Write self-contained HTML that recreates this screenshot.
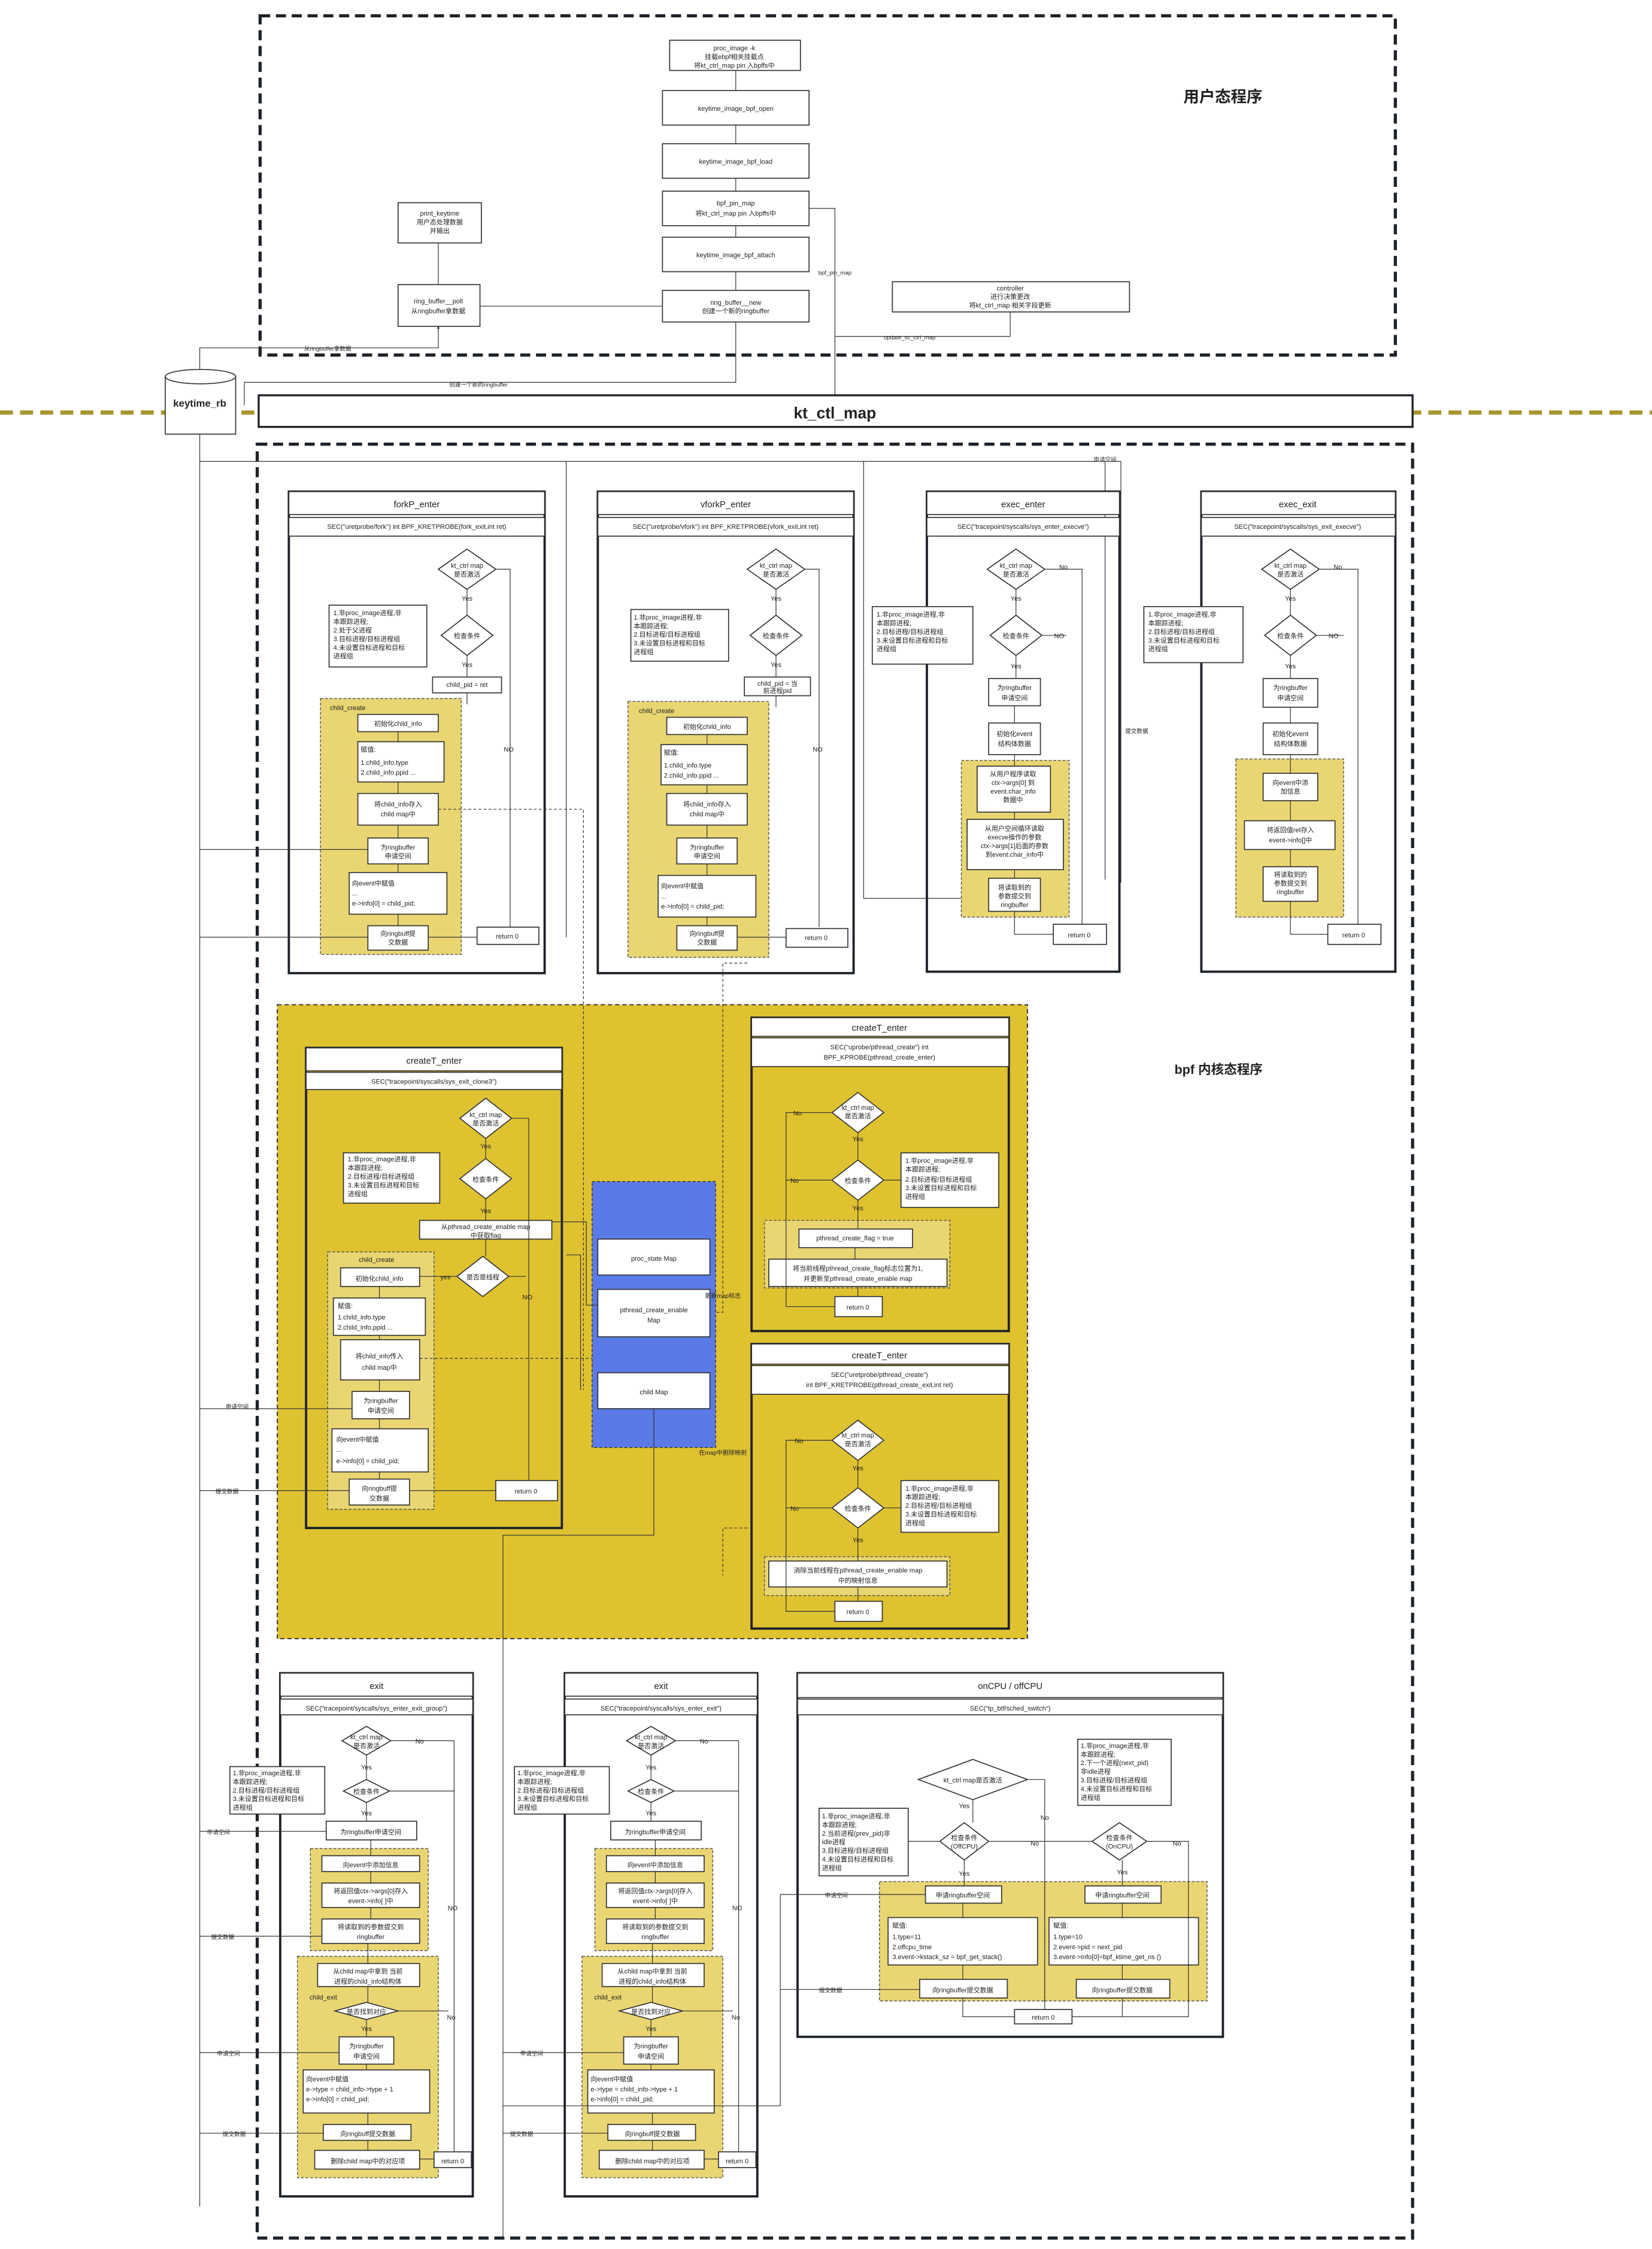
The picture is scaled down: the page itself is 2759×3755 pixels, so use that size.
<!DOCTYPE html>
<html><head><meta charset="utf-8">
<style>
html,body{margin:0;padding:0;background:#fff;}
svg{display:block}
text{font-family:"Liberation Sans","Noto Sans CJK SC",sans-serif;font-size:4.6px;fill:#222;text-anchor:middle}
.l{text-anchor:start}
.b{fill:#fff;stroke:#333;stroke-width:.7}
.p{fill:none;stroke:#1e2329;stroke-width:1.6}
.g{fill:#e9d672;stroke:#555;stroke-width:.6;stroke-dasharray:2,1.2}
.ln{fill:none;stroke:#333;stroke-width:.5}
.dl{fill:none;stroke:#333;stroke-width:.5;stroke-dasharray:2,1.5}
.bd{fill:none;stroke:#1e2329;stroke-width:2.2;stroke-dasharray:7,4}
.tt{font-size:6.2px}
</style></head><body>
<svg width="2759" height="3755" viewBox="0 0 1149.6 1564.6" xmlns="http://www.w3.org/2000/svg">
<defs><marker id="a" viewBox="0 0 6 6" refX="5" refY="3" markerWidth="4" markerHeight="4" orient="auto"><path d="M0,0L6,3L0,6z" fill="#333"/></marker></defs>

<!-- user space -->
<rect x="181" y="11" width="790" height="236" class="bd"/>
<text x="851" y="71" style="font-size:11px;font-weight:bold">用户态程序</text>
<rect x="466" y="28" width="91" height="21" class="b"/><text x="511" y="35">proc_image -k</text><text x="511" y="41">挂载ebpf相关挂载点</text><text x="511" y="47">将kt_ctrl_map pin 入bpffs中</text>
<rect x="461" y="63" width="102" height="24" class="b"/><text x="512" y="77">keytime_image_bpf_open</text>
<rect x="461" y="100" width="102" height="24" class="b"/><text x="512" y="114">keytime_image_bpf_load</text>
<rect x="461" y="133" width="102" height="24" class="b"/><text x="512" y="143">bpf_pin_map</text><text x="512" y="150">将kt_ctrl_map pin 入bpffs中</text>
<rect x="461" y="165" width="102" height="24" class="b"/><text x="512" y="179">keytime_image_bpf_attach</text>
<rect x="461" y="202" width="102" height="22" class="b"/><text x="512" y="212">ring_buffer__new</text><text x="512" y="218">创建一个新的ringbuffer</text>
<rect x="277" y="198" width="57" height="29" class="b"/><text x="305" y="211">ring_buffer__poll</text><text x="305" y="218">从ringbuffer拿数据</text>
<rect x="277" y="141" width="58" height="28" class="b"/><text x="306" y="150">print_keytime</text><text x="306" y="156">用户态处理数据</text><text x="306" y="162">并输出</text>
<rect x="621" y="196" width="165" height="21" class="b"/><text x="703" y="202">controller</text><text x="703" y="208">进行决策更改</text><text x="703" y="214">将kt_ctrl_map 相关字段更新</text>
<path d="M512 49V63M512 87V100M512 124V133M512 157V165M512 189V202M461 213H334M305 198V169M563 145H581V275M703 217V234H581M512 224V266H170V282M139 260V242H305V227" class="ln" marker-end="url(#a)"/>
<text x="581" y="191" style="font-size:4px">bpf_pin_map</text>
<text x="633" y="236" style="font-size:4px">update_sc_ctrl_map</text>
<text x="228" y="244" style="font-size:4px">从ringbuffer拿数据</text>
<text x="333" y="269" style="font-size:4px">创建一个新的ringbuffer</text>

<!-- middle -->
<path d="M0 287H1150" stroke="#a89530" stroke-width="3" stroke-dasharray="9,5"/>
<rect x="115" y="262" width="49" height="40" fill="#fff" stroke="#333" stroke-width=".7"/>
<ellipse cx="139.5" cy="262" rx="24.5" ry="5" fill="#fff" stroke="#333" stroke-width=".7"/>
<text x="139" y="283" style="font-size:7px;font-weight:bold">keytime_rb</text>
<rect x="180" y="275" width="803" height="22" fill="#fff" stroke="#1e2329" stroke-width="1.4"/>
<text x="581" y="291" style="font-size:11px;font-weight:bold">kt_ctl_map</text>

<!-- kernel -->
<rect x="179" y="309" width="804" height="1248" class="bd"/>
<text x="848" y="747" style="font-size:9px;font-weight:bold">bpf 内核态程序</text>
<path d="M139 1535V302M139 321H780M394 321V652M601 321V625H669M780 321V614M769 321V612" class="ln"/>
<text x="769" y="321" style="font-size:4px;fill:#333">申请空间</text>
<text x="791" y="510" style="font-size:4px">提交数据</text>

<!-- forkP -->
<g>
<rect x="201" y="342" width="178" height="335" class="p"/>
<rect x="201" y="342" width="178" height="16" class="b"/><text x="290" y="353" class="tt">forkP_enter</text>
<rect x="201" y="360" width="178" height="13" class="b"/><text x="290" y="368">SEC("uretprobe/fork") int BPF_KRETPROBE(fork_exit,int ret)</text>
<path d="M325 382l20 14l-20 14l-20-14z" class="b"/><text x="325" y="395">kt_ctrl map</text><text x="325" y="401">是否激活</text>
<path d="M325 428l18 14l-18 14l-18-14z" class="b"/><text x="325" y="444">检查条件</text>
<rect x="229" y="421" width="68" height="43" class="b"/><text class="l" x="232" y="428">1.非proc_image进程,非</text><text class="l" x="232" y="434">本跟踪进程;</text><text class="l" x="232" y="440">2.处于父进程</text><text class="l" x="232" y="446">3.目标进程/目标进程组</text><text class="l" x="232" y="452">4.未设置目标进程和目标</text><text class="l" x="232" y="458">进程组</text>
<rect x="301" y="471" width="48" height="11" class="b"/><text x="325" y="478">child_pid = ret</text>
<text x="325" y="418">Yes</text><text x="325" y="464">Yes</text><text x="354" y="523">NO</text>
<rect x="223" y="486" width="98" height="178" class="g"/><text x="242" y="494">child_create</text>
<rect x="249" y="497" width="56" height="12" class="b"/><text x="277" y="505">初始化child_info</text>
<rect x="249" y="516" width="60" height="28" class="b"/><text class="l" x="251" y="523">赋值:</text><text class="l" x="251" y="532">1.child_info.type</text><text class="l" x="251" y="539">2.child_info.ppid ...</text>
<rect x="249" y="552" width="56" height="22" class="b"/><text x="277" y="561">将child_info存入</text><text x="277" y="568">child map中</text>
<rect x="256" y="583" width="42" height="18" class="b"/><text x="277" y="591">为ringbuffer</text><text x="277" y="597">申请空间</text>
<rect x="243" y="607" width="68" height="29" class="b"/><text class="l" x="245" y="616">向event中赋值</text><text class="l" x="245" y="623">...</text><text class="l" x="245" y="630">e->info[0] = child_pid;</text>
<rect x="256" y="644" width="42" height="17" class="b"/><text x="277" y="651">向ringbuff提</text><text x="277" y="657">交数据</text>
<rect x="332" y="645" width="43" height="12" class="b"/><text x="353" y="653">return 0</text>
<path d="M325 410V428M325 456V471M325 482V490M277 509V516M277 544V552M277 574V583M277 601V607M277 636V644M298 652H332M345 396H355V645M139 591H256M139 652H256" class="ln"/>
</g>
<!-- vforkP -->
<g transform="translate(215,0)">
<rect x="201" y="342" width="178" height="335" class="p"/>
<rect x="201" y="342" width="178" height="16" class="b"/><text x="290" y="353" class="tt">vforkP_enter</text>
<rect x="201" y="360" width="178" height="13" class="b"/><text x="290" y="368">SEC("uretprobe/vfork")  int BPF_KRETPROBE(vfork_exit,int ret)</text>
<path d="M325 382l20 14l-20 14l-20-14z" class="b"/><text x="325" y="395">kt_ctrl map</text><text x="325" y="401">是否激活</text>
<path d="M325 428l18 14l-18 14l-18-14z" class="b"/><text x="325" y="444">检查条件</text>
<rect x="224" y="424" width="68" height="36" class="b"/><text class="l" x="226" y="431">1.非proc_image进程,非</text><text class="l" x="226" y="437">本跟踪进程;</text><text class="l" x="226" y="443">2.目标进程/目标进程组</text><text class="l" x="226" y="449">3.未设置目标进程和目标</text><text class="l" x="226" y="455">进程组</text>
<rect x="303" y="471" width="46" height="13" class="b"/><text x="326" y="477">child_pid = 当</text><text x="326" y="482">前进程pid</text>
<text x="325" y="418">Yes</text><text x="325" y="464">Yes</text><text x="354" y="523">NO</text>
<rect x="222" y="488" width="98" height="178" class="g"/><text x="242" y="496">child_create</text>
<rect x="249" y="499" width="56" height="12" class="b"/><text x="277" y="507">初始化child_info</text>
<rect x="245" y="518" width="60" height="28" class="b"/><text class="l" x="247" y="525">赋值:</text><text class="l" x="247" y="534">1.child_info.type</text><text class="l" x="247" y="541">2.child_info.ppid ...</text>
<rect x="249" y="552" width="56" height="22" class="b"/><text x="277" y="561">将child_info存入</text><text x="277" y="568">child map中</text>
<rect x="256" y="583" width="42" height="18" class="b"/><text x="277" y="591">为ringbuffer</text><text x="277" y="597">申请空间</text>
<rect x="243" y="609" width="68" height="29" class="b"/><text class="l" x="245" y="618">向event中赋值</text><text class="l" x="245" y="625">...</text><text class="l" x="245" y="632">e->info[0] = child_pid;</text>
<rect x="256" y="644" width="42" height="17" class="b"/><text x="277" y="651">向ringbuff提</text><text x="277" y="657">交数据</text>
<rect x="332" y="646" width="43" height="13" class="b"/><text x="353" y="654">return 0</text>
<path d="M325 410V428M325 456V471M325 484V492M277 511V518M277 546V552M277 574V583M277 601V609M277 638V644M298 652H332M345 396H355V645" class="ln"/>
</g>
<!-- exec_enter -->
<g>
<rect x="645" y="342" width="134" height="334" class="p"/>
<rect x="645" y="342" width="134" height="16" class="b"/><text x="712" y="353" class="tt">exec_enter</text>
<rect x="645" y="360" width="134" height="13" class="b"/><text x="712" y="368">SEC("tracepoint/syscalls/sys_enter_execve")</text>
<path d="M707 382l20 14l-20 14l-20-14z" class="b"/><text x="707" y="395">kt_ctrl map</text><text x="707" y="401">是否激活</text>
<path d="M707 428l18 14l-18 14l-18-14z" class="b"/><text x="707" y="444">检查条件</text>
<rect x="607" y="422" width="70" height="40" class="b"/><text class="l" x="610" y="429">1.非proc_image进程,非</text><text class="l" x="610" y="435">本跟踪进程;</text><text class="l" x="610" y="441">2.目标进程/目标进程组</text><text class="l" x="610" y="447">3.未设置目标进程和目标</text><text class="l" x="610" y="453">进程组</text>
<text x="740" y="396">No</text><text x="737" y="444">NO</text><text x="707" y="418">Yes</text><text x="707" y="465">Yes</text>
<rect x="688" y="472" width="36" height="19" class="b"/><text x="706" y="480">为ringbuffer</text><text x="706" y="487">申请空间</text>
<rect x="688" y="503" width="36" height="22" class="b"/><text x="706" y="512">初始化event</text><text x="706" y="519">结构体数据</text>
<rect x="669" y="529" width="75" height="109" class="g"/>
<rect x="680" y="533" width="51" height="32" class="b"/><text x="705" y="540">从用户程序读取</text><text x="705" y="546">ctx->args[0] 到</text><text x="705" y="552">event.char_info</text><text x="705" y="558">数据中</text>
<rect x="673" y="570" width="67" height="35" class="b"/><text x="706" y="578">从用户空间循环读取</text><text x="706" y="584">execve操作的参数</text><text x="706" y="590">ctx->args[1]后面的参数</text><text x="706" y="596">到event.char_info中</text>
<rect x="688" y="611" width="36" height="23" class="b"/><text x="706" y="619">将读取到的</text><text x="706" y="625">参数提交到</text><text x="706" y="631">ringbuffer</text>
<rect x="733" y="643" width="37" height="14" class="b"/><text x="751" y="652">return 0</text>
<path d="M707 410V428M707 456V472M706 491V503M706 525V533M706 565V570M706 605V611M727 396H753V643M725 442H742M706 634V650H733" class="ln"/>
</g>
<!-- exec_exit -->
<g>
<rect x="836" y="342" width="135" height="334" class="p"/>
<rect x="836" y="342" width="135" height="16" class="b"/><text x="903" y="353" class="tt">exec_exit</text>
<rect x="836" y="360" width="135" height="13" class="b"/><text x="903" y="368">SEC("tracepoint/syscalls/sys_exit_execve")</text>
<path d="M898 382l20 14l-20 14l-20-14z" class="b"/><text x="898" y="395">kt_ctrl map</text><text x="898" y="401">是否激活</text>
<path d="M898 428l18 14l-18 14l-18-14z" class="b"/><text x="898" y="444">检查条件</text>
<rect x="796" y="422" width="69" height="39" class="b"/><text class="l" x="799" y="429">1.非proc_image进程,非</text><text class="l" x="799" y="435">本跟踪进程;</text><text class="l" x="799" y="441">2.目标进程/目标进程组</text><text class="l" x="799" y="447">3.未设置目标进程和目标</text><text class="l" x="799" y="453">进程组</text>
<text x="931" y="396">No</text><text x="928" y="444">NO</text><text x="898" y="418">Yes</text><text x="898" y="465">Yes</text>
<rect x="879" y="472" width="38" height="20" class="b"/><text x="898" y="480">为ringbuffer</text><text x="898" y="487">申请空间</text>
<rect x="879" y="503" width="38" height="22" class="b"/><text x="898" y="512">初始化event</text><text x="898" y="519">结构体数据</text>
<rect x="860" y="528" width="75" height="110" class="g"/>
<rect x="879" y="538" width="38" height="19" class="b"/><text x="898" y="546">向event中添</text><text x="898" y="552">加信息</text>
<rect x="866" y="571" width="63" height="20" class="b"/><text x="898" y="579">将返回值ret存入</text><text x="898" y="586">event->info[]中</text>
<rect x="879" y="603" width="38" height="24" class="b"/><text x="898" y="610">将读取到的</text><text x="898" y="616">参数提交到</text><text x="898" y="622">ringbuffer</text>
<rect x="924" y="643" width="37" height="14" class="b"/><text x="942" y="652">return 0</text>
<path d="M898 410V428M898 456V472M898 492V503M898 525V538M898 557V571M898 591V603M918 396H945V643M916 442H935M898 627V650H924" class="ln"/>
</g>

<!-- yellow region -->
<rect x="193" y="699" width="522" height="441" fill="#dfc230" stroke="#333" stroke-width=".8" stroke-dasharray="3,2"/>
<g>
<rect x="213" y="729" width="178" height="334" class="p"/>
<rect x="213" y="729" width="178" height="16" class="b"/><text x="302" y="740" class="tt">createT_enter</text>
<rect x="213" y="746" width="178" height="12" class="b"/><text x="302" y="754">SEC("tracepoint/syscalls/sys_exit_clone3")</text>
<path d="M338 764l18 14l-18 14l-18-14z" class="b"/><text x="338" y="777">kt_ctrl map</text><text x="338" y="783">是否激活</text>
<path d="M338 806l18 14l-18 14l-18-14z" class="b"/><text x="338" y="822">检查条件</text>
<rect x="239" y="802" width="67" height="35" class="b"/><text class="l" x="242" y="808">1.非proc_image进程,非</text><text class="l" x="242" y="814">本跟踪进程;</text><text class="l" x="242" y="820">2.目标进程/目标进程组</text><text class="l" x="242" y="826">3.未设置目标进程和目标</text><text class="l" x="242" y="832">进程组</text>
<text x="338" y="799">Yes</text><text x="338" y="844">Yes</text>
<rect x="292" y="849" width="92" height="13" class="b"/><text x="338" y="855">从pthread_create_enable map</text><text x="338" y="861">中获取flag</text>
<path d="M336 874l18 14l-18 14l-18-14z" class="b"/><text x="336" y="890">是否是线程</text>
<rect x="228" y="871" width="74" height="179" class="g"/><text x="262" y="878">child_create</text>
<rect x="237" y="882" width="55" height="13" class="b"/><text x="264" y="891">初始化child_info</text>
<text x="310" y="890">yes</text><text x="367" y="904">NO</text>
<rect x="232" y="903" width="64" height="26" class="b"/><text class="l" x="235" y="910">赋值:</text><text class="l" x="235" y="918">1.child_info.type</text><text class="l" x="235" y="925">2.child_info.ppid ...</text>
<rect x="237" y="932" width="55" height="28" class="b"/><text x="264" y="945">将child_info传入</text><text x="264" y="953">child map中</text>
<rect x="245" y="968" width="40" height="19" class="b"/><text x="265" y="976">为ringbuffer</text><text x="265" y="983">申请空间</text>
<rect x="231" y="994" width="67" height="30" class="b"/><text class="l" x="234" y="1003">向event中赋值</text><text class="l" x="234" y="1010">...</text><text class="l" x="234" y="1018">e->info[0] = child_pid;</text>
<rect x="243" y="1029" width="42" height="18" class="b"/><text x="264" y="1037">向ringbuff提</text><text x="264" y="1044">交数据</text>
<rect x="345" y="1030" width="43" height="14" class="b"/><text x="366" y="1039">return 0</text>
<path d="M338 792V806M338 834V849M338 862V874M318 888H292M264 895V903M264 929V932M264 960V968M264 987V994M264 1024V1029M285 1037H345M356 778H368V1030M354 888H366M139 980H245M139 1037H243" class="ln"/>
<text x="165" y="980" style="font-size:4px">申请空间</text><text x="158" y="1039" style="font-size:4px">提交数据</text>
</g>
<!-- blue -->
<rect x="412" y="822" width="86" height="185" fill="#5a7be6" stroke="#333" stroke-width=".6" stroke-dasharray="2,1.5"/>
<rect x="416" y="862" width="78" height="25" class="b"/><text x="455" y="877">proc_state   Map</text>
<rect x="416" y="897" width="78" height="33" class="b"/><text x="455" y="913">pthread_create_enable</text><text x="455" y="920">Map</text>
<rect x="416" y="955" width="78" height="25" class="b"/><text x="455" y="970">child  Map</text>
<path d="M416 908H408V850H384M404 967V873H394M455 980V1068H350V1557" class="ln"/>
<path d="M292 945H412M305 563H406V967M520 670H503V913H498M520 1063H503V1096" class="dl"/>
<text x="503" y="903" style="font-size:4.2px">更新map标志</text><text x="503" y="1012" style="font-size:4.2px">在map中删除映射</text>

<!-- createT right 1 -->
<g>
<rect x="523" y="708" width="179" height="218" class="p"/>
<rect x="523" y="708" width="179" height="13" class="b"/><text x="612" y="717" class="tt">createT_enter</text>
<rect x="523" y="722" width="179" height="20" class="b"/><text x="612" y="730">SEC("uprobe/pthread_create") int</text><text x="612" y="737">BPF_KPROBE(pthread_create_enter)</text>
<path d="M597 760l18 14l-18 14l-18-14z" class="b"/><text x="597" y="772">kt_ctrl map</text><text x="597" y="778">是否激活</text>
<path d="M597 807l18 14l-18 14l-18-14z" class="b"/><text x="597" y="823">检查条件</text>
<rect x="627" y="802" width="68" height="38" class="b"/><text class="l" x="630" y="809">1.非proc_image进程,非</text><text class="l" x="630" y="815">本跟踪进程;</text><text class="l" x="630" y="822">2.目标进程/目标进程组</text><text class="l" x="630" y="828">3.未设置目标进程和目标</text><text class="l" x="630" y="834">进程组</text>
<text x="555" y="776">No</text><text x="553" y="823">No</text><text x="597" y="794">Yes</text><text x="597" y="842">Yes</text>
<rect x="532" y="849" width="129" height="47" class="g"/>
<rect x="556" y="855" width="79" height="13" class="b"/><text x="595" y="863">pthread_create_flag = true</text>
<rect x="535" y="876" width="124" height="19" class="b"/><text x="597" y="884">将当前线程pthread_create_flag标志位置为1,</text><text x="597" y="891">并更新至pthread_create_enable map</text>
<rect x="581" y="902" width="33" height="14" class="b"/><text x="597" y="911">return 0</text>
<path d="M597 788V807M597 835V855M595 868V876M597 895V902M579 774H547V909H581M579 821H547M615 821H627" class="ln"/>
</g>
<!-- createT right 2 -->
<g>
<rect x="523" y="935" width="179" height="198" class="p"/>
<rect x="523" y="935" width="179" height="14" class="b"/><text x="612" y="945" class="tt">createT_enter</text>
<rect x="523" y="950" width="179" height="20" class="b"/><text x="612" y="958">SEC("uretprobe/pthread_create")</text><text x="612" y="965">int BPF_KRETPROBE(pthread_create_exit,int ret)</text>
<path d="M597 988l18 14l-18 14l-18-14z" class="b"/><text x="597" y="1000">kt_ctrl map</text><text x="597" y="1006">是否激活</text>
<path d="M597 1035l18 14l-18 14l-18-14z" class="b"/><text x="597" y="1051">检查条件</text>
<rect x="627" y="1030" width="68" height="36" class="b"/><text class="l" x="630" y="1037">1.非proc_image进程,非</text><text class="l" x="630" y="1043">本跟踪进程;</text><text class="l" x="630" y="1049">2.目标进程/目标进程组</text><text class="l" x="630" y="1055">3.未设置目标进程和目标</text><text class="l" x="630" y="1061">进程组</text>
<text x="556" y="1004">No</text><text x="553" y="1051">No</text><text x="597" y="1023">Yes</text><text x="597" y="1073">Yes</text>
<rect x="532" y="1083" width="129" height="27" class="g"/>
<rect x="535" y="1086" width="124" height="18" class="b"/><text x="597" y="1094">消除当前线程在pthread_create_enable map</text><text x="597" y="1101">中的映射信息</text>
<rect x="581" y="1114" width="33" height="14" class="b"/><text x="597" y="1123">return 0</text>
<path d="M597 1016V1035M597 1063V1086M597 1104V1114M579 1002H547V1121H581M579 1049H547M615 1049H627" class="ln"/>
</g>

<!-- exit panels -->
<g id="ex">
<rect x="195" y="1164" width="134" height="364" class="p"/>
<rect x="195" y="1164" width="134" height="16" class="b"/><text x="262" y="1175" class="tt">exit</text>
<rect x="195" y="1182" width="134" height="11" class="b"/><text x="262" y="1190">SEC("tracepoint/syscalls/sys_enter_exit_group")</text>
<path d="M255 1201l17 10l-17 10l-17-10z" class="b"/><text x="255" y="1210">kt_ctrl map</text><text x="255" y="1216">是否激活</text>
<path d="M255 1238l16 8l-16 8l-16-8z" class="b"/><text x="255" y="1248">检查条件</text>
<rect x="160" y="1229" width="66" height="33" class="b"/><text class="l" x="162" y="1235">1.非proc_image进程,非</text><text class="l" x="162" y="1241">本跟踪进程;</text><text class="l" x="162" y="1247">2.目标进程/目标进程组</text><text class="l" x="162" y="1253">3.未设置目标进程和目标</text><text class="l" x="162" y="1259">进程组</text>
<text x="292" y="1213">No</text><text x="315" y="1329">NO</text><text x="255" y="1231">Yes</text><text x="255" y="1263">Yes</text>
<rect x="227" y="1267" width="63" height="13" class="b"/><text x="258" y="1276">为ringbuffer申请空间</text>
<rect x="216" y="1286" width="82" height="71" class="g"/>
<rect x="224" y="1291" width="68" height="11" class="b"/><text x="258" y="1299">向event中添加信息</text>
<rect x="224" y="1310" width="68" height="17" class="b"/><text x="258" y="1317">将返回值ctx->args[0]存入</text><text x="258" y="1324">event->info[ ]中</text>
<rect x="224" y="1335" width="68" height="17" class="b"/><text x="258" y="1342">将读取到的参数提交到</text><text x="258" y="1349">ringbuffer</text>
<rect x="207" y="1361" width="98" height="154" class="g"/><text x="225" y="1391">child_exit</text>
<rect x="221" y="1366" width="71" height="16" class="b"/><text x="256" y="1373">从child map中拿到 当前</text><text x="256" y="1380">进程的child_info结构体</text>
<path d="M255 1393l22 6l-22 6l-22-6z" class="b"/><text x="255" y="1401">是否找到对应</text>
<text x="314" y="1405">No</text><text x="255" y="1413">Yes</text>
<rect x="236" y="1417" width="38" height="19" class="b"/><text x="255" y="1425">为ringbuffer</text><text x="255" y="1432">申请空间</text>
<rect x="211" y="1440" width="88" height="30" class="b"/><text class="l" x="213" y="1448">向event中赋值</text><text class="l" x="213" y="1455">e->type = child_info->type + 1</text><text class="l" x="213" y="1462">e->info[0] = child_pid;</text>
<rect x="225" y="1478" width="61" height="11" class="b"/><text x="256" y="1486">向ringbuff提交数据</text>
<rect x="219" y="1496" width="73" height="13" class="b"/><text x="256" y="1505">删除child map中的对应项</text>
<rect x="302" y="1497" width="26" height="11" class="b"/><text x="315" y="1505">return 0</text>
<path d="M255 1221V1238M255 1254V1267M258 1280V1291M258 1302V1310M258 1327V1335M256 1352V1366M256 1382V1393M255 1405V1417M255 1436V1440M256 1470V1478M256 1489V1496M292 1502H302M272 1211H316V1497M271 1246H316M277 1399H312M139 1274H227M139 1347H224M139 1428H236M139 1484H225" class="ln"/>
</g>
<text x="152" y="1276" style="font-size:4px">申请空间</text><text x="155" y="1349" style="font-size:4px">提交数据</text><text x="159" y="1430" style="font-size:4px">申请空间</text><text x="163" y="1486" style="font-size:4px">提交数据</text>
<g transform="translate(198,0)">
<rect x="195" y="1164" width="134" height="364" class="p"/>
<rect x="195" y="1164" width="134" height="16" class="b"/><text x="262" y="1175" class="tt">exit</text>
<rect x="195" y="1182" width="134" height="11" class="b"/><text x="262" y="1190">SEC("tracepoint/syscalls/sys_enter_exit")</text>
<path d="M255 1201l17 10l-17 10l-17-10z" class="b"/><text x="255" y="1210">kt_ctrl map</text><text x="255" y="1216">是否激活</text>
<path d="M255 1238l16 8l-16 8l-16-8z" class="b"/><text x="255" y="1248">检查条件</text>
<rect x="160" y="1229" width="66" height="33" class="b"/><text class="l" x="162" y="1235">1.非proc_image进程,非</text><text class="l" x="162" y="1241">本跟踪进程;</text><text class="l" x="162" y="1247">2.目标进程/目标进程组</text><text class="l" x="162" y="1253">3.未设置目标进程和目标</text><text class="l" x="162" y="1259">进程组</text>
<text x="292" y="1213">No</text><text x="315" y="1329">NO</text><text x="255" y="1231">Yes</text><text x="255" y="1263">Yes</text>
<rect x="227" y="1267" width="63" height="13" class="b"/><text x="258" y="1276">为ringbuffer申请空间</text>
<rect x="216" y="1286" width="82" height="71" class="g"/>
<rect x="224" y="1291" width="68" height="11" class="b"/><text x="258" y="1299">向event中添加信息</text>
<rect x="224" y="1310" width="68" height="17" class="b"/><text x="258" y="1317">将返回值ctx->args[0]存入</text><text x="258" y="1324">event->info[ ]中</text>
<rect x="224" y="1335" width="68" height="17" class="b"/><text x="258" y="1342">将读取到的参数提交到</text><text x="258" y="1349">ringbuffer</text>
<rect x="207" y="1361" width="98" height="154" class="g"/><text x="225" y="1391">child_exit</text>
<rect x="221" y="1366" width="71" height="16" class="b"/><text x="256" y="1373">从child map中拿到 当前</text><text x="256" y="1380">进程的child_info结构体</text>
<path d="M255 1393l22 6l-22 6l-22-6z" class="b"/><text x="255" y="1401">是否找到对应</text>
<text x="314" y="1405">No</text><text x="255" y="1413">Yes</text>
<rect x="236" y="1417" width="38" height="19" class="b"/><text x="255" y="1425">为ringbuffer</text><text x="255" y="1432">申请空间</text>
<rect x="211" y="1440" width="88" height="30" class="b"/><text class="l" x="213" y="1448">向event中赋值</text><text class="l" x="213" y="1455">e->type = child_info->type + 1</text><text class="l" x="213" y="1462">e->info[0] = child_pid;</text>
<rect x="225" y="1478" width="61" height="11" class="b"/><text x="256" y="1486">向ringbuff提交数据</text>
<rect x="219" y="1496" width="73" height="13" class="b"/><text x="256" y="1505">删除child map中的对应项</text>
<rect x="302" y="1497" width="26" height="11" class="b"/><text x="315" y="1505">return 0</text>
<path d="M255 1221V1238M255 1254V1267M258 1280V1291M258 1302V1310M258 1327V1335M256 1352V1366M256 1382V1393M255 1405V1417M255 1436V1440M256 1470V1478M256 1489V1496M292 1502H302M272 1211H316V1497M271 1246H316M277 1399H312M152 1428H236M152 1484H225" class="ln"/>
</g>
<text x="370" y="1430" style="font-size:4px">申请空间</text><text x="363" y="1486" style="font-size:4px">提交数据</text>

<!-- onCPU -->
<g>
<rect x="555" y="1164" width="296" height="253" class="p"/>
<rect x="555" y="1164" width="296" height="17" class="b"/><text x="703" y="1175" class="tt">onCPU / offCPU</text>
<rect x="555" y="1182" width="296" height="11" class="b"/><text x="703" y="1190">SEC("tp_btf/sched_switch")</text>
<path d="M677 1224l38 14l-38 14l-38-14z" class="b"/><text x="677" y="1240">kt_ctrl map是否激活</text>
<path d="M671 1268l17 13l-17 13l-17-13z" class="b"/><text x="671" y="1280">检查条件</text><text x="671" y="1286">(OffCPU)</text>
<path d="M779 1268l19 13l-19 13l-19-13z" class="b"/><text x="779" y="1280">检查条件</text><text x="779" y="1286">(OnCPU)</text>
<rect x="570" y="1258" width="62" height="47" class="b"/><text class="l" x="572" y="1265">1.非proc_image进程,非</text><text class="l" x="572" y="1271">本跟踪进程;</text><text class="l" x="572" y="1277">2.当前进程(prev_pid)非</text><text class="l" x="572" y="1283">idle进程</text><text class="l" x="572" y="1289">3.目标进程/目标进程组</text><text class="l" x="572" y="1295">4.未设置目标进程和目标</text><text class="l" x="572" y="1301">进程组</text>
<rect x="750" y="1210" width="65" height="46" class="b"/><text class="l" x="752" y="1216">1.非proc_image进程,非</text><text class="l" x="752" y="1222">本跟踪进程;</text><text class="l" x="752" y="1228">2.下一个进程(next_pid)</text><text class="l" x="752" y="1234">非idle进程</text><text class="l" x="752" y="1240">3.目标进程/目标进程组</text><text class="l" x="752" y="1246">4.未设置目标进程和目标</text><text class="l" x="752" y="1252">进程组</text>
<text x="671" y="1258">Yes</text><text x="727" y="1266">No</text><text x="720" y="1284">No</text><text x="819" y="1284">No</text><text x="671" y="1305">Yes</text><text x="781" y="1304">Yes</text>
<rect x="612" y="1309" width="115" height="83" class="g"/><rect x="727" y="1309" width="113" height="83" class="g"/>
<rect x="644" y="1312" width="53" height="12" class="b"/><text x="670" y="1320">申请ringbuffer空间</text>
<rect x="618" y="1334" width="104" height="33" class="b"/><text class="l" x="621" y="1341">赋值:</text><text class="l" x="621" y="1349">1.type=11</text><text class="l" x="621" y="1356">2.offcpu_time</text><text class="l" x="621" y="1363">3.event->kstack_sz = bpf_get_stack()</text>
<rect x="640" y="1377" width="61" height="13" class="b"/><text x="670" y="1386">向ringbuffer提交数据</text>
<rect x="755" y="1312" width="53" height="12" class="b"/><text x="781" y="1320">申请ringbuffer空间</text>
<rect x="730" y="1334" width="104" height="33" class="b"/><text class="l" x="733" y="1341">赋值:</text><text class="l" x="733" y="1349">1.type=10</text><text class="l" x="733" y="1356">2.event->pid = next_pid</text><text class="l" x="733" y="1363">3.event->info[0]=bpf_ktime_get_ns ()</text>
<rect x="749" y="1377" width="65" height="13" class="b"/><text x="781" y="1386">向ringbuffer提交数据</text>
<rect x="706" y="1398" width="40" height="10" class="b"/><text x="726" y="1405">return 0</text>
<path d="M677 1252V1268M671 1294V1312M670 1324V1334M670 1367V1377M781 1294V1312M781 1324V1334M781 1367V1377M688 1281H760M654 1281H632M760 1281H750M715 1238H727V1398M798 1281H827V1403H746M670 1390V1403H706M781 1390V1403M543 1318H644M543 1384H640M543 1318V1465H350" class="ln"/>
<text x="582" y="1320" style="font-size:4px">申请空间</text><text x="578" y="1386" style="font-size:4px">提交数据</text>
</g>
</svg>
</body></html>
